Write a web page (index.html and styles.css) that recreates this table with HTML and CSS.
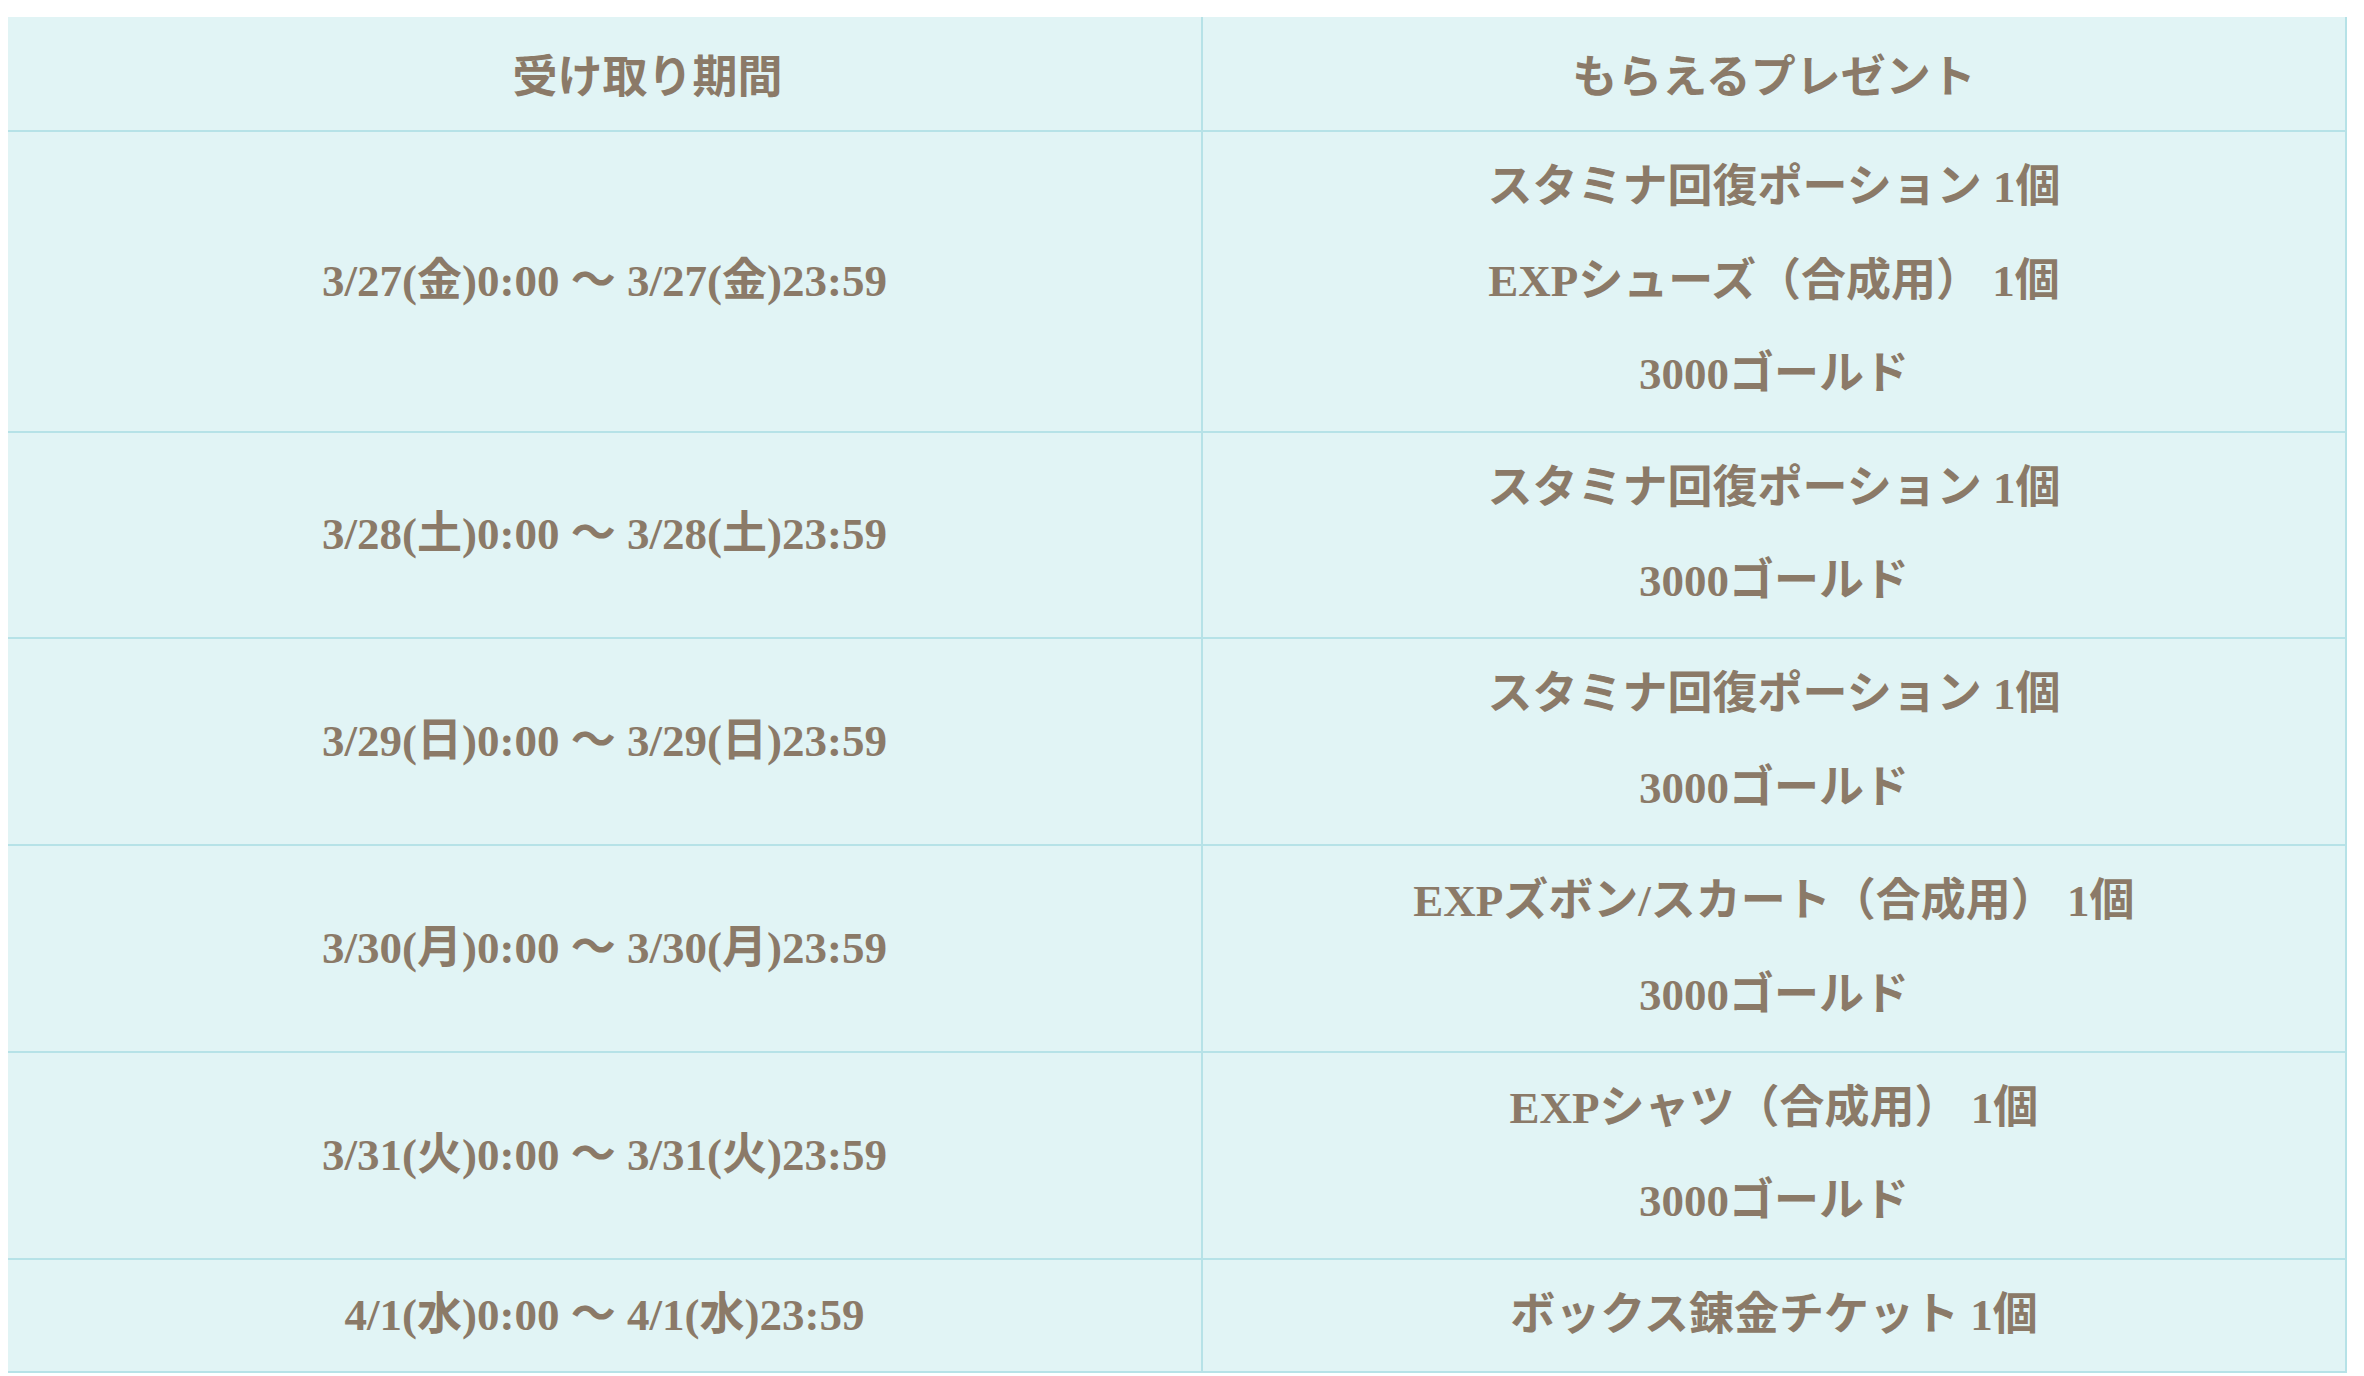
FILE: index.html
```html
<!DOCTYPE html>
<html lang="ja">
<head>
<meta charset="utf-8">
<title>受け取り期間とプレゼント</title>
<link rel="stylesheet" href="styles.css">
</head>
<body>
<table class="gift-table">
  <colgroup>
    <col class="col-period">
    <col class="col-gift">
  </colgroup>
  <thead>
    <tr>
      <th class="head-period">受け取り期間</th>
      <th>もらえるプレゼント</th>
    </tr>
  </thead>
  <tbody>
    <tr>
      <td>3/27(金)0:00 〜 3/27(金)23:59</td>
      <td>スタミナ回復ポーション 1個<br>EXPシューズ（合成用） 1個<br>3000ゴールド</td>
    </tr>
    <tr>
      <td>3/28(土)0:00 〜 3/28(土)23:59</td>
      <td>スタミナ回復ポーション 1個<br>3000ゴールド</td>
    </tr>
    <tr>
      <td>3/29(日)0:00 〜 3/29(日)23:59</td>
      <td>スタミナ回復ポーション 1個<br>3000ゴールド</td>
    </tr>
    <tr>
      <td>3/30(月)0:00 〜 3/30(月)23:59</td>
      <td>EXPズボン/スカート（合成用） 1個<br>3000ゴールド</td>
    </tr>
    <tr>
      <td>3/31(火)0:00 〜 3/31(火)23:59</td>
      <td>EXPシャツ（合成用） 1個<br>3000ゴールド</td>
    </tr>
    <tr>
      <td>4/1(水)0:00 〜 4/1(水)23:59</td>
      <td>ボックス錬金チケット 1個</td>
    </tr>
  </tbody>
</table>
</body>
</html>
```
FILE: styles.css
```css
html, body {
  margin: 0;
  padding: 0;
  background: #ffffff;
}

body {
  padding: 17px 0 0 8px;
}

.gift-table {
  width: 2339px;
  border-collapse: separate;
  border-spacing: 0;
  table-layout: fixed;
  font-family: "Liberation Serif", "Noto Sans CJK JP", serif;
  font-weight: 700;
  font-size: 45px;
  line-height: 93.4px;
  color: #8b7a68;
}

.col-period {
  width: 1195px;
}

.col-gift {
  width: 1144px;
}

.gift-table th,
.gift-table td {
  background: #e1f4f5;
  text-align: center;
  vertical-align: middle;
  padding: 9px 0;
  border-right: 2px solid #b6e2e7;
  border-bottom: 2px solid #b6e2e7;
  font-weight: 700;
}

.gift-table th {
  font-family: "Noto Sans CJK JP", sans-serif;
  padding: 10px 0;
}

.gift-table .head-period {
  padding-left: 86px;
}
```
